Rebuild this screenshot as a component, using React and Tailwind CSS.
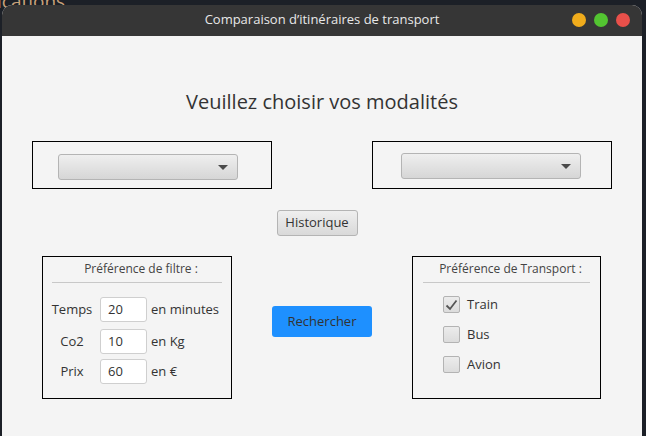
import React from "react";

const font = { fontFamily: '"Open Sans", "Noto Sans", sans-serif' };

function Combo() {
  return (
    <div className="relative h-[26px] w-[180px] rounded-[3px] border border-[#b4b4b4] bg-gradient-to-b from-[#efefef] to-[#d6d6d6]">
      <div className="absolute right-[9px] top-[10px] h-0 w-0 border-x-[5px] border-t-[5px] border-x-transparent border-t-[#4a4a4a]" />
    </div>
  );
}

function Field({ label, value, unit }) {
  return (
    <div className="flex h-[25px] items-center">
      <div className="w-[50px] text-center text-[13px] text-[#333]">{label}</div>
      <div className="ml-[3px] flex h-[25px] w-[47px] items-center rounded-[3px] border border-[#cfcfcf] bg-white pl-[7px] text-[13px] text-[#333]">
        {value}
      </div>
      <div className="ml-[4px] text-[13px] text-[#333]">{unit}</div>
    </div>
  );
}

function Check({ label, checked }) {
  return (
    <div className="flex h-[17px] items-center">
      <div className="flex h-[17px] w-[17px] items-center justify-center rounded-[2px] border border-[#b3b3b3] bg-gradient-to-b from-[#ececec] to-[#dcdcdc]">
        {checked && (
          <svg width="13" height="12" viewBox="0 0 13 12">
            <path d="M1.5 6.5 L5 10 L11.5 1.5" fill="none" stroke="#555" strokeWidth="1.8" />
          </svg>
        )}
      </div>
      <div className="ml-[7px] text-[13px] text-[#333]">{label}</div>
    </div>
  );
}

export default function App() {
  return (
    <div className="relative h-[436px] w-[646px] overflow-hidden bg-[#1c2027] pl-[2px] pr-[4px] pt-[5px]" style={font}>
      <div className="absolute left-[-3px] top-[-12px] text-[19px] leading-[26px] text-[#c9a27a]">ications</div>
      <div className="relative flex h-full flex-col overflow-hidden rounded-t-[10px] bg-[#f4f4f4]">
        <div className="relative flex h-[31px] shrink-0 items-center justify-center bg-[#363636] text-[13px] text-[#e8e8e8]">
          <span className="pb-[1px]">Comparaison d’itinéraires de transport</span>
          <div className="absolute right-[12px] top-[8px] flex gap-[8px]">
            <div className="h-[14px] w-[14px] rounded-full bg-[#f0ac1c]" />
            <div className="h-[14px] w-[14px] rounded-full bg-[#53c431]" />
            <div className="h-[14px] w-[14px] rounded-full bg-[#e9504a]" />
          </div>
        </div>

        <div className="flex flex-col">
          <div className="mt-[52px] text-center text-[20px] leading-[27px] text-[#333]">Veuillez choisir vos modalités</div>

          <div className="mt-[26px] flex justify-between px-[30px]">
            <div className="h-[48px] w-[240px] border border-black pl-[25px] pt-[12px]">
              <Combo />
            </div>
            <div className="h-[48px] w-[240px] border border-black pl-[28px] pt-[11px]">
              <Combo />
            </div>
          </div>

          <div className="mt-[21px] flex justify-center pr-[10px]">
            <div className="flex h-[26px] w-[81px] items-center justify-center rounded-[3px] border border-[#b4b4b4] bg-gradient-to-b from-[#efefef] to-[#d9d9d9] text-[13px] text-[#333]">
              Historique
            </div>
          </div>

          <div className="mt-[20px] flex items-start pl-[40px]">
            <div className="h-[143px] w-[190px] border border-black">
              <div className="pl-[8px] pt-[3px] text-center text-[12px] leading-[17px] text-[#444]">Préférence de filtre :</div>
              <div className="mx-[9px] mt-[5px] h-px bg-[#c8c8c8]" />
              <div className="ml-[4px] mt-[14px] flex flex-col">
                <Field label="Temps" value="20" unit="en minutes" />
                <div className="mt-[7px]">
                  <Field label="Co2" value="10" unit="en Kg" />
                </div>
                <div className="mt-[5px]">
                  <Field label="Prix" value="60" unit="en €" />
                </div>
              </div>
            </div>

            <div className="ml-[40px] mt-[50px] flex h-[31px] w-[100px] items-center justify-center rounded-[3px] bg-[#1e90ff] text-[13px] text-[#333]">
              Rechercher
            </div>

            <div className="ml-[40px] h-[143px] w-[189px] border border-black">
              <div className="pl-[8px] pt-[3px] text-center text-[12px] leading-[17px] text-[#444]">Préférence de Transport :</div>
              <div className="mx-[10px] mt-[5px] h-px bg-[#c8c8c8]" />
              <div className="ml-[30px] mt-[13px] flex flex-col gap-[13px]">
                <Check label="Train" checked />
                <Check label="Bus" />
                <Check label="Avion" />
              </div>
            </div>
          </div>
        </div>
      </div>
    </div>
  );
}
